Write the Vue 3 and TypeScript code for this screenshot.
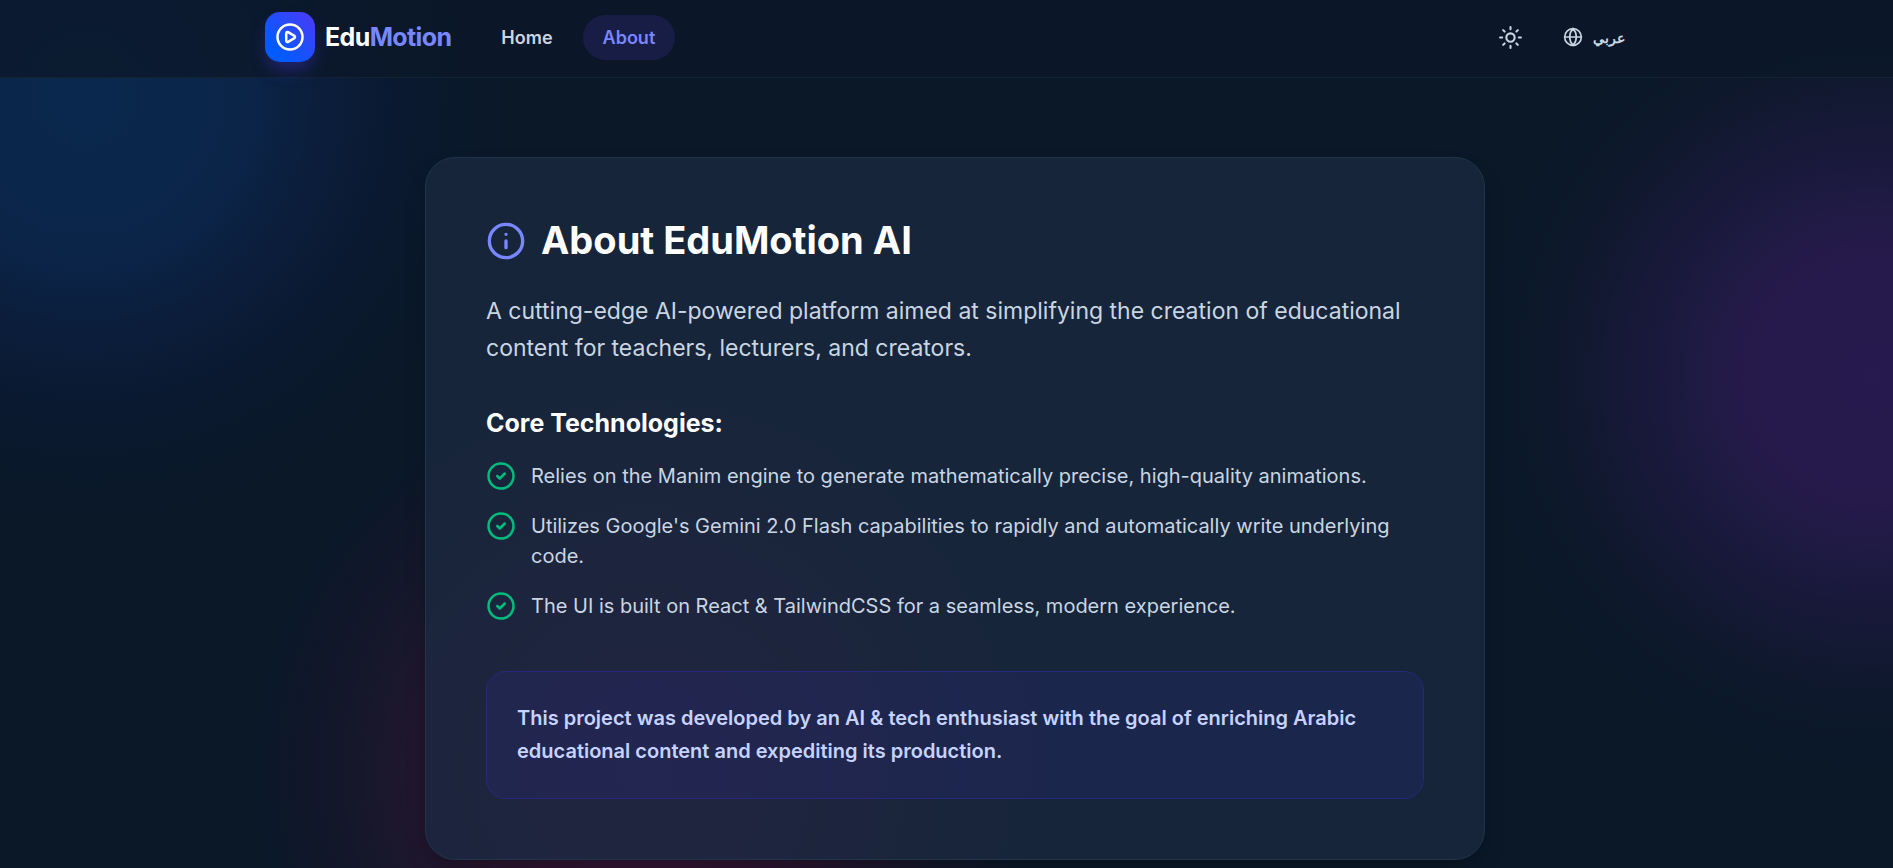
<script setup lang="ts">
const features: string[] = [
  'Relies on the Manim engine to generate mathematically precise, high-quality animations.',
  "Utilizes Google's Gemini 2.0 Flash capabilities to rapidly and automatically write underlying code.",
  'The UI is built on React & TailwindCSS for a seamless, modern experience.',
]
</script>

<template>
  <div class="page">
    <header class="topbar">
      <div class="container">
        <a class="brand" href="#">
          <span class="logo">
            <svg viewBox="0 0 24 24" aria-hidden="true">
              <circle cx="12" cy="12" r="10" />
              <path d="M9 9.003a1 1 0 0 1 1.517-.859l4.997 2.997a1 1 0 0 1 0 1.718l-4.997 2.997A1 1 0 0 1 9 14.996z" />
            </svg>
          </span>
          <span class="name">Edu<span class="accent">Motion</span></span>
        </a>
        <nav class="nav">
          <a href="#home">Home</a>
          <a href="#about" class="active" aria-current="page">About</a>
        </nav>
        <div class="tools">
          <button class="theme" type="button" aria-label="Toggle theme">
            <svg viewBox="0 0 24 24" aria-hidden="true">
              <circle cx="12" cy="12" r="4" />
              <path d="M12 2v2M12 20v2M4.93 4.93l1.41 1.41M17.66 17.66l1.41 1.41M2 12h2M20 12h2M6.34 17.66l-1.41 1.41M19.07 4.93l-1.41 1.41" />
            </svg>
          </button>
          <button class="lang" type="button">
            <svg viewBox="0 0 24 24" aria-hidden="true">
              <circle cx="12" cy="12" r="10" />
              <path d="M12 2a14.5 14.5 0 0 0 0 20 14.5 14.5 0 0 0 0-20M2 12h20" />
            </svg>
            <span lang="ar">عربي</span>
          </button>
        </div>
      </div>
    </header>

    <main class="main">
      <article class="card">
        <h1>
          <svg viewBox="0 0 24 24" aria-hidden="true">
            <circle cx="12" cy="12" r="10" />
            <path d="M12 16v-4M12 8h.01" />
          </svg>
          About EduMotion AI
        </h1>
        <p class="lead">
          A cutting-edge AI-powered platform aimed at simplifying the creation of educational content for teachers,
          lecturers, and creators.
        </p>
        <h2>Core Technologies:</h2>
        <ul>
          <li v-for="feature in features" :key="feature">
            <svg viewBox="0 0 24 24" aria-hidden="true">
              <circle cx="12" cy="12" r="10" />
              <path d="m9 12 2 2 4-4" />
            </svg>
            <span>{{ feature }}</span>
          </li>
        </ul>
        <p class="note">
          This project was developed by an AI &amp; tech enthusiast with the goal of enriching Arabic educational
          content and expediting its production.
        </p>
      </article>
    </main>
  </div>
</template>

<style>
body {
  margin: 0;
  background: #0a1828;
}
</style>

<style scoped>
.page {
  box-sizing: border-box;
  min-height: 100vh;
  color: #cad5e2;
  font-family: Inter, 'Noto Sans', sans-serif;
  background:
    radial-gradient(circle at 85px 95px, #0a284d 0, #0a274b 90px, #0b2448 165px, #0b1d3a 245px, #0a1930 310px, transparent 420px),
    radial-gradient(circle at calc(100% - 20px) 376px, #261a4e 0, #251a4a 130px, #1f1a44 175px, #171938 240px, #0f182e 305px, transparent 390px),
    radial-gradient(circle at 645px 770px, #341535 0, #311533 100px, #27152f 196px, #20162e 225px, #1a172c 265px, #13172a 310px, transparent 390px),
    #0a1828;
}

svg {
  flex: none;
  fill: none;
  stroke: currentColor;
  stroke-width: 2;
  stroke-linecap: round;
  stroke-linejoin: round;
}

.topbar {
  padding: 12px 0 15px 17px;
  border-bottom: 1px solid #142333;
  background: rgba(11, 24, 41, 0.8);
}

.container {
  display: flex;
  align-items: center;
  max-width: 1380px;
  margin: 0 auto;
}

.brand {
  display: flex;
  align-items: center;
  gap: 10px;
  color: #ffffff;
  text-decoration: none;
}

.logo {
  display: grid;
  place-items: center;
  width: 50px;
  height: 50px;
  border-radius: 15px;
  background: linear-gradient(45deg, #005cff 20%, #4f39f6);
  box-shadow: 0 10px 18px -4px rgba(79, 57, 246, 0.4);
}

.logo svg {
  width: 30px;
  height: 30px;
}

.name {
  font-size: 25px;
  font-weight: 700;
  line-height: 35px;
  letter-spacing: -0.025em;
}

.accent {
  color: #7886ff;
}

.nav {
  display: flex;
  gap: 10px;
  margin-left: 30px;
}

.nav a {
  padding: 10px 20px;
  border-radius: 23px;
  color: #cad5e2;
  font-size: 18px;
  font-weight: 600;
  line-height: 25px;
  text-decoration: none;
}

.nav .active {
  background: #181d46;
  color: #7886ff;
}

.tools {
  display: flex;
  align-items: center;
  gap: 10px;
  margin-left: auto;
}

button {
  display: flex;
  align-items: center;
  border: 0;
  background: none;
  color: #cad5e2;
  font-family: inherit;
  cursor: pointer;
}

.theme {
  padding: 10px;
}

.theme svg {
  width: 25px;
  height: 25px;
}

.lang {
  gap: 10px;
  padding: 10px 20px;
  font-size: 14px;
  font-weight: 700;
  line-height: 25px;
}

.lang svg {
  width: 20px;
  height: 20px;
}

.main {
  padding: 79px 30px 9px 47px;
}

.card {
  box-sizing: border-box;
  max-width: 1060px;
  margin: 0 auto;
  padding: 60px;
  border: 1px solid #21344a;
  border-radius: 30px;
  background:
    radial-gradient(circle at 219px 612px, #20253f 0, #1e253e 150px, #1a253c 280px, transparent 430px),
    #16253a;
  box-shadow: 0 12px 24px -6px rgba(0, 0, 0, 0.3);
}

h1,
h2,
p,
ul {
  margin: 0;
}

h1 {
  display: flex;
  align-items: center;
  gap: 15px;
  margin-bottom: 30px;
  color: #ffffff;
  font-size: 38px;
  font-weight: 700;
  line-height: 45px;
}

h1 svg {
  width: 40px;
  height: 40px;
  color: #7886ff;
}

.lead {
  font-size: 23px;
  line-height: 37px;
}

h2 {
  margin: 39px 0 21px;
  color: #ffffff;
  font-size: 25px;
  font-weight: 700;
  line-height: 34px;
}

ul {
  display: grid;
  gap: 20px;
  padding: 0;
  list-style: none;
}

li {
  display: flex;
  gap: 15px;
  font-size: 20px;
  line-height: 30px;
}

li svg {
  width: 30px;
  height: 30px;
  color: #00bc7d;
}

.note {
  margin-top: 50px;
  padding: 30px;
  border: 1px solid #26287a;
  border-radius: 20px;
  background: rgba(42, 42, 130, 0.25);
  color: #c6d2ff;
  font-size: 20px;
  font-weight: 600;
  line-height: 33px;
}
</style>
